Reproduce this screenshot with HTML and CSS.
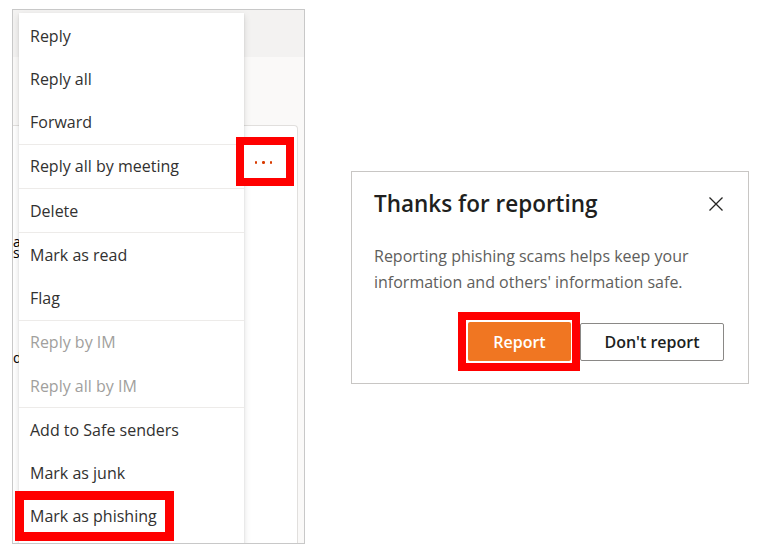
FILE: index.html
```html
<!DOCTYPE html>
<html>
    <head>
        <title>Report phishing</title>
        <link rel="stylesheet" href="styles.css">
    </head>
    <body>
        <div class="page">
            <div class="shot">
                <div class="topbar"></div>
                <div class="content">
                    <div class="card">
                        <div class="frag">al<br>s</div>
                        <div class="frag last">d</div>
                    </div>
                </div>

                <div class="menu">
                    <div class="item">Reply</div>
                    <div class="item">Reply all</div>
                    <div class="item">Forward</div>
                    <div class="divider"></div>
                    <div class="item">Reply all by meeting</div>
                    <div class="divider"></div>
                    <div class="item">Delete</div>
                    <div class="divider"></div>
                    <div class="item">Mark as read</div>
                    <div class="item">Flag</div>
                    <div class="divider"></div>
                    <div class="item disabled">Reply by IM</div>
                    <div class="item disabled">Reply all by IM</div>
                    <div class="divider"></div>
                    <div class="item">Add to Safe senders</div>
                    <div class="item">Mark as junk</div>
                    <div class="item"><span class="mark">Mark as phishing</span></div>
                </div>

                <div class="more-mark">
                    <span class="dot"></span><span class="dot"></span><span class="dot"></span>
                </div>
            </div>

            <div class="dialog">
                <div class="dialog-head">
                    <div class="title">Thanks for reporting</div>
                    <svg class="close" width="16" height="16" viewBox="0 0 16 16">
                        <path d="M1.5 1.5 L14.5 14.5 M14.5 1.5 L1.5 14.5" stroke="#252423" stroke-width="1.3" fill="none"/>
                    </svg>
                </div>
                <div class="text">
                    Reporting phishing scams helps keep your<br>
                    information and others' information safe.
                </div>
                <div class="actions">
                    <span class="report-mark"><span class="btn primary">Report</span></span>
                    <span class="btn">Don't report</span>
                </div>
            </div>
        </div>
    </body>
</html>
```

FILE: styles.css
```css
body {
    margin: 0;
    font-family: "Open Sans", "Noto Sans", sans-serif;
    color: #323130;
    background: #fff;
}
.page {
    display: flex;
    align-items: flex-start;
    padding: 9px 0 0 12px;
}

/* left: outlook screenshot */
.shot {
    width: 291px;
    height: 533px;
    border: 1px solid #c8c8c8;
    background: #faf9f8;
    position: relative;
    overflow: hidden;
    display: flex;
    flex-direction: column;
}
.topbar {
    height: 47px;
    flex: none;
    background: #f3f2f1;
}
.content {
    flex: 1;
    display: flex;
    padding: 68px 6px 0 0;
}
.card {
    flex: 1;
    margin-left: -10px;
    padding: 110px 0 0 9px;
    background: #fff;
    border: 1px solid #e1dfdd;
    border-bottom: none;
    border-radius: 4px 4px 0 0;
}
.frag {
    font-size: 14px;
    line-height: 11px;
    color: #000;
}
.frag.last {
    margin-top: 94px;
}

.more-mark {
    position: absolute;
    left: 223px;
    top: 127px;
    width: 58px;
    height: 49px;
    box-sizing: border-box;
    border: 8px solid #ff0000;
    background: #fff;
    display: flex;
    align-items: center;
    justify-content: center;
    gap: 5px;
    padding: 2px 3px 0 0;
}
.dot {
    width: 2.4px;
    height: 2.4px;
    border-radius: 50%;
    background: #d83b01;
}

.menu {
    position: absolute;
    left: 6px;
    top: 3px;
    width: 225px;
    padding: 1px 0 10px;
    background: #fff;
    box-shadow: 0 3px 7px rgba(0, 0, 0, 0.13), 0 0.6px 1.8px rgba(0, 0, 0, 0.11);
}
.item {
    height: 43.25px;
    padding-left: 11px;
    display: flex;
    align-items: center;
    font-size: 16px;
    white-space: nowrap;
}
.item.disabled {
    color: #a19f9d;
}
.divider {
    height: 1px;
    background: #edebe9;
}
.mark {
    display: inline-block;
    flex: none;
    margin-left: -15px;
    padding: 0 8px 0 6px;
    height: 32px;
    line-height: 32px;
    border: 9px solid #ff0000;
    background: #fff;
}

/* right: dialog */
.dialog {
    margin: 162px 0 0 46px;
    width: 398px;
    box-sizing: border-box;
    border: 1px solid #c8c6c4;
    background: #fff;
    padding: 16px 24px 12px 22px;
}
.dialog-head {
    display: flex;
    align-items: center;
    justify-content: space-between;
}
.title {
    font-size: 22.5px;
    font-weight: 600;
    line-height: 32px;
    color: #201f1e;
}
.close {
    display: block;
}
.text {
    margin-top: 23px;
    font-size: 16px;
    line-height: 26px;
    color: #605e5c;
}
.actions {
    margin-top: 17px;
    display: flex;
    justify-content: flex-end;
    align-items: center;
}
.report-mark {
    display: inline-block;
    border: 8px solid #ff0000;
    padding: 2px 1px 2px 2px;
    background: #fff;
}
.btn {
    display: inline-flex;
    align-items: center;
    justify-content: center;
    box-sizing: border-box;
    width: 144px;
    height: 38px;
    border: 1px solid #8a8886;
    border-radius: 2px;
    font-size: 16px;
    font-weight: 600;
    color: #201f1e;
}
.btn.primary {
    width: 103px;
    height: 39px;
    border: none;
    background: #f07622;
    color: #fff;
}
```
